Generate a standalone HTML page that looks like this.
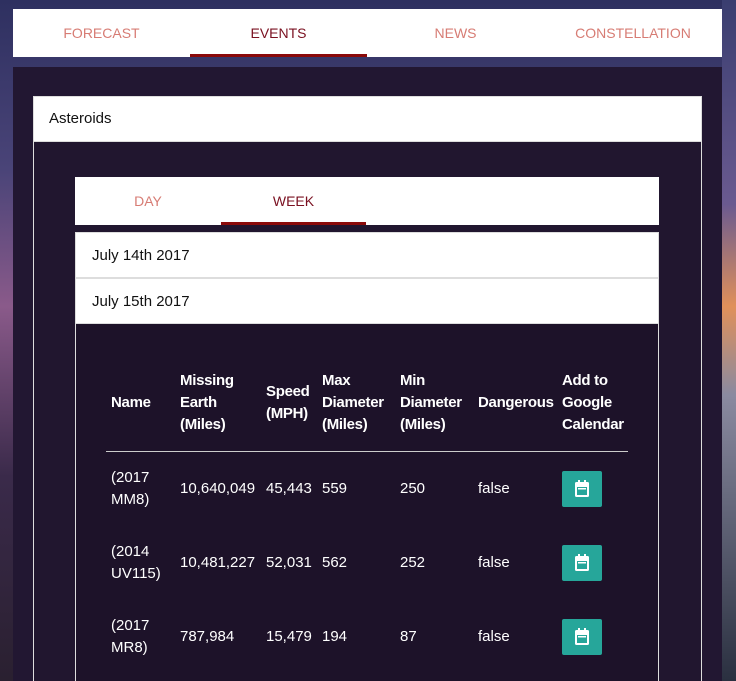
<!DOCTYPE html>
<html><head><meta charset="utf-8"><style>
*{margin:0;padding:0;box-sizing:border-box}
html,body{width:736px;height:681px;overflow:hidden}
body{font-family:"Liberation Sans",sans-serif;font-size:15px;
background:linear-gradient(180deg,#2e3060 0%,#4a4478 25%,#8a5a8a 45%,#3a2a4a 70%,#2a2030 100%);position:relative}
.r{position:absolute;right:0;top:0;width:14px;height:681px;background:linear-gradient(180deg,#3a3e70 0%,#6a5a90 30%,#e0905a 45%,#8a8aa0 58%,#2a3040 100%)}
.a{position:absolute}
.nav{left:13px;top:9px;width:709px;height:48px;background:#fff}
.nav div,.tabs div{position:absolute;top:0;height:48px;line-height:48px;text-align:center;color:#d77c74;font-size:14px}
.nav .on,.tabs .on{color:#7a1020;border-bottom:3px solid #8b0a0a}
.outer{left:13px;top:67px;width:709px;height:614px;background:#221732}
.inner{left:33px;top:96px;width:669px;height:600px;border:1px solid #ddd;background:#21162f}
.hdr{left:33px;top:96px;width:669px;height:46px;background:#fff;border:1px solid #ddd;line-height:44px;padding-left:15px;font-size:15px;color:#111}
.tabs{left:75px;top:177px;width:584px;height:48px;background:#fff}
.p2{left:75px;top:232px;width:584px;height:460px;border:1px solid #ddd;background:#1d1229}
.row{left:75px;width:584px;height:46px;background:#fff;line-height:46px;padding-left:16px;font-size:15px;color:#111;border:1px solid #ddd}
.t{color:#fff;font-size:15px;line-height:22px;position:absolute;white-space:nowrap}
.b{font-weight:bold;letter-spacing:-0.3px}
.btn{position:absolute;left:562px;width:40px;height:36px;background:#26a69a;border-radius:2px}
.btn svg{position:absolute;left:12px;top:9px}
.line{left:106px;top:451px;width:522px;height:1px;background:#ccc}
</style></head><body>
<div class="r"></div>
<div class="a nav">
<div style="left:0;width:177px">FORECAST</div>
<div class="on" style="left:177px;width:177px">EVENTS</div>
<div style="left:354px;width:177px">NEWS</div>
<div style="left:531px;width:178px">CONSTELLATION</div>
</div>
<div class="a outer"></div>
<div class="a inner"></div>
<div class="a hdr">Asteroids</div>
<div class="a tabs">
<div style="left:0;width:146px">DAY</div>
<div class="on" style="left:146px;width:145px">WEEK</div>
</div>
<div class="a p2"></div>
<div class="a row" style="top:232px">July 14th 2017</div>
<div class="a row" style="top:278px">July 15th 2017</div>
<div class="t b" style="left:111px;top:392px">Name</div>
<div class="t b" style="left:180px;top:370px">Missing<br>Earth<br>(Miles)</div>
<div class="t b" style="left:266px;top:381px">Speed<br>(MPH)</div>
<div class="t b" style="left:322px;top:370px">Max<br>Diameter<br>(Miles)</div>
<div class="t b" style="left:400px;top:370px">Min<br>Diameter<br>(Miles)</div>
<div class="t b" style="left:478px;top:392px">Dangerous</div>
<div class="t b" style="left:562px;top:370px">Add to<br>Google<br>Calendar</div>
<div class="a line"></div>

<div class="t" style="left:111px;top:467px">(2017<br>MM8)</div>
<div class="t" style="left:180px;top:478px">10,640,049</div>
<div class="t" style="left:266px;top:478px">45,443</div>
<div class="t" style="left:322px;top:478px">559</div>
<div class="t" style="left:400px;top:478px">250</div>
<div class="t" style="left:478px;top:478px">false</div>
<div class="btn" style="top:471px"><svg width="16" height="18" viewBox="0 0 16 18"><rect x="1" y="2" width="14" height="15" rx="1.5" fill="#fff"/><rect x="3" y="7" width="10" height="8" fill="#26a69a"/><rect x="4" y="0" width="2" height="4" fill="#fff"/><rect x="10" y="0" width="2" height="4" fill="#fff"/><rect x="4" y="8" width="8" height="1.5" fill="#fff"/></svg></div>

<div class="t" style="left:111px;top:541px">(2014<br>UV115)</div>
<div class="t" style="left:180px;top:552px">10,481,227</div>
<div class="t" style="left:266px;top:552px">52,031</div>
<div class="t" style="left:322px;top:552px">562</div>
<div class="t" style="left:400px;top:552px">252</div>
<div class="t" style="left:478px;top:552px">false</div>
<div class="btn" style="top:545px"><svg width="16" height="18" viewBox="0 0 16 18"><rect x="1" y="2" width="14" height="15" rx="1.5" fill="#fff"/><rect x="3" y="7" width="10" height="8" fill="#26a69a"/><rect x="4" y="0" width="2" height="4" fill="#fff"/><rect x="10" y="0" width="2" height="4" fill="#fff"/><rect x="4" y="8" width="8" height="1.5" fill="#fff"/></svg></div>

<div class="t" style="left:111px;top:615px">(2017<br>MR8)</div>
<div class="t" style="left:180px;top:626px">787,984</div>
<div class="t" style="left:266px;top:626px">15,479</div>
<div class="t" style="left:322px;top:626px">194</div>
<div class="t" style="left:400px;top:626px">87</div>
<div class="t" style="left:478px;top:626px">false</div>
<div class="btn" style="top:619px"><svg width="16" height="18" viewBox="0 0 16 18"><rect x="1" y="2" width="14" height="15" rx="1.5" fill="#fff"/><rect x="3" y="7" width="10" height="8" fill="#26a69a"/><rect x="4" y="0" width="2" height="4" fill="#fff"/><rect x="10" y="0" width="2" height="4" fill="#fff"/><rect x="4" y="8" width="8" height="1.5" fill="#fff"/></svg></div>
</body></html>
